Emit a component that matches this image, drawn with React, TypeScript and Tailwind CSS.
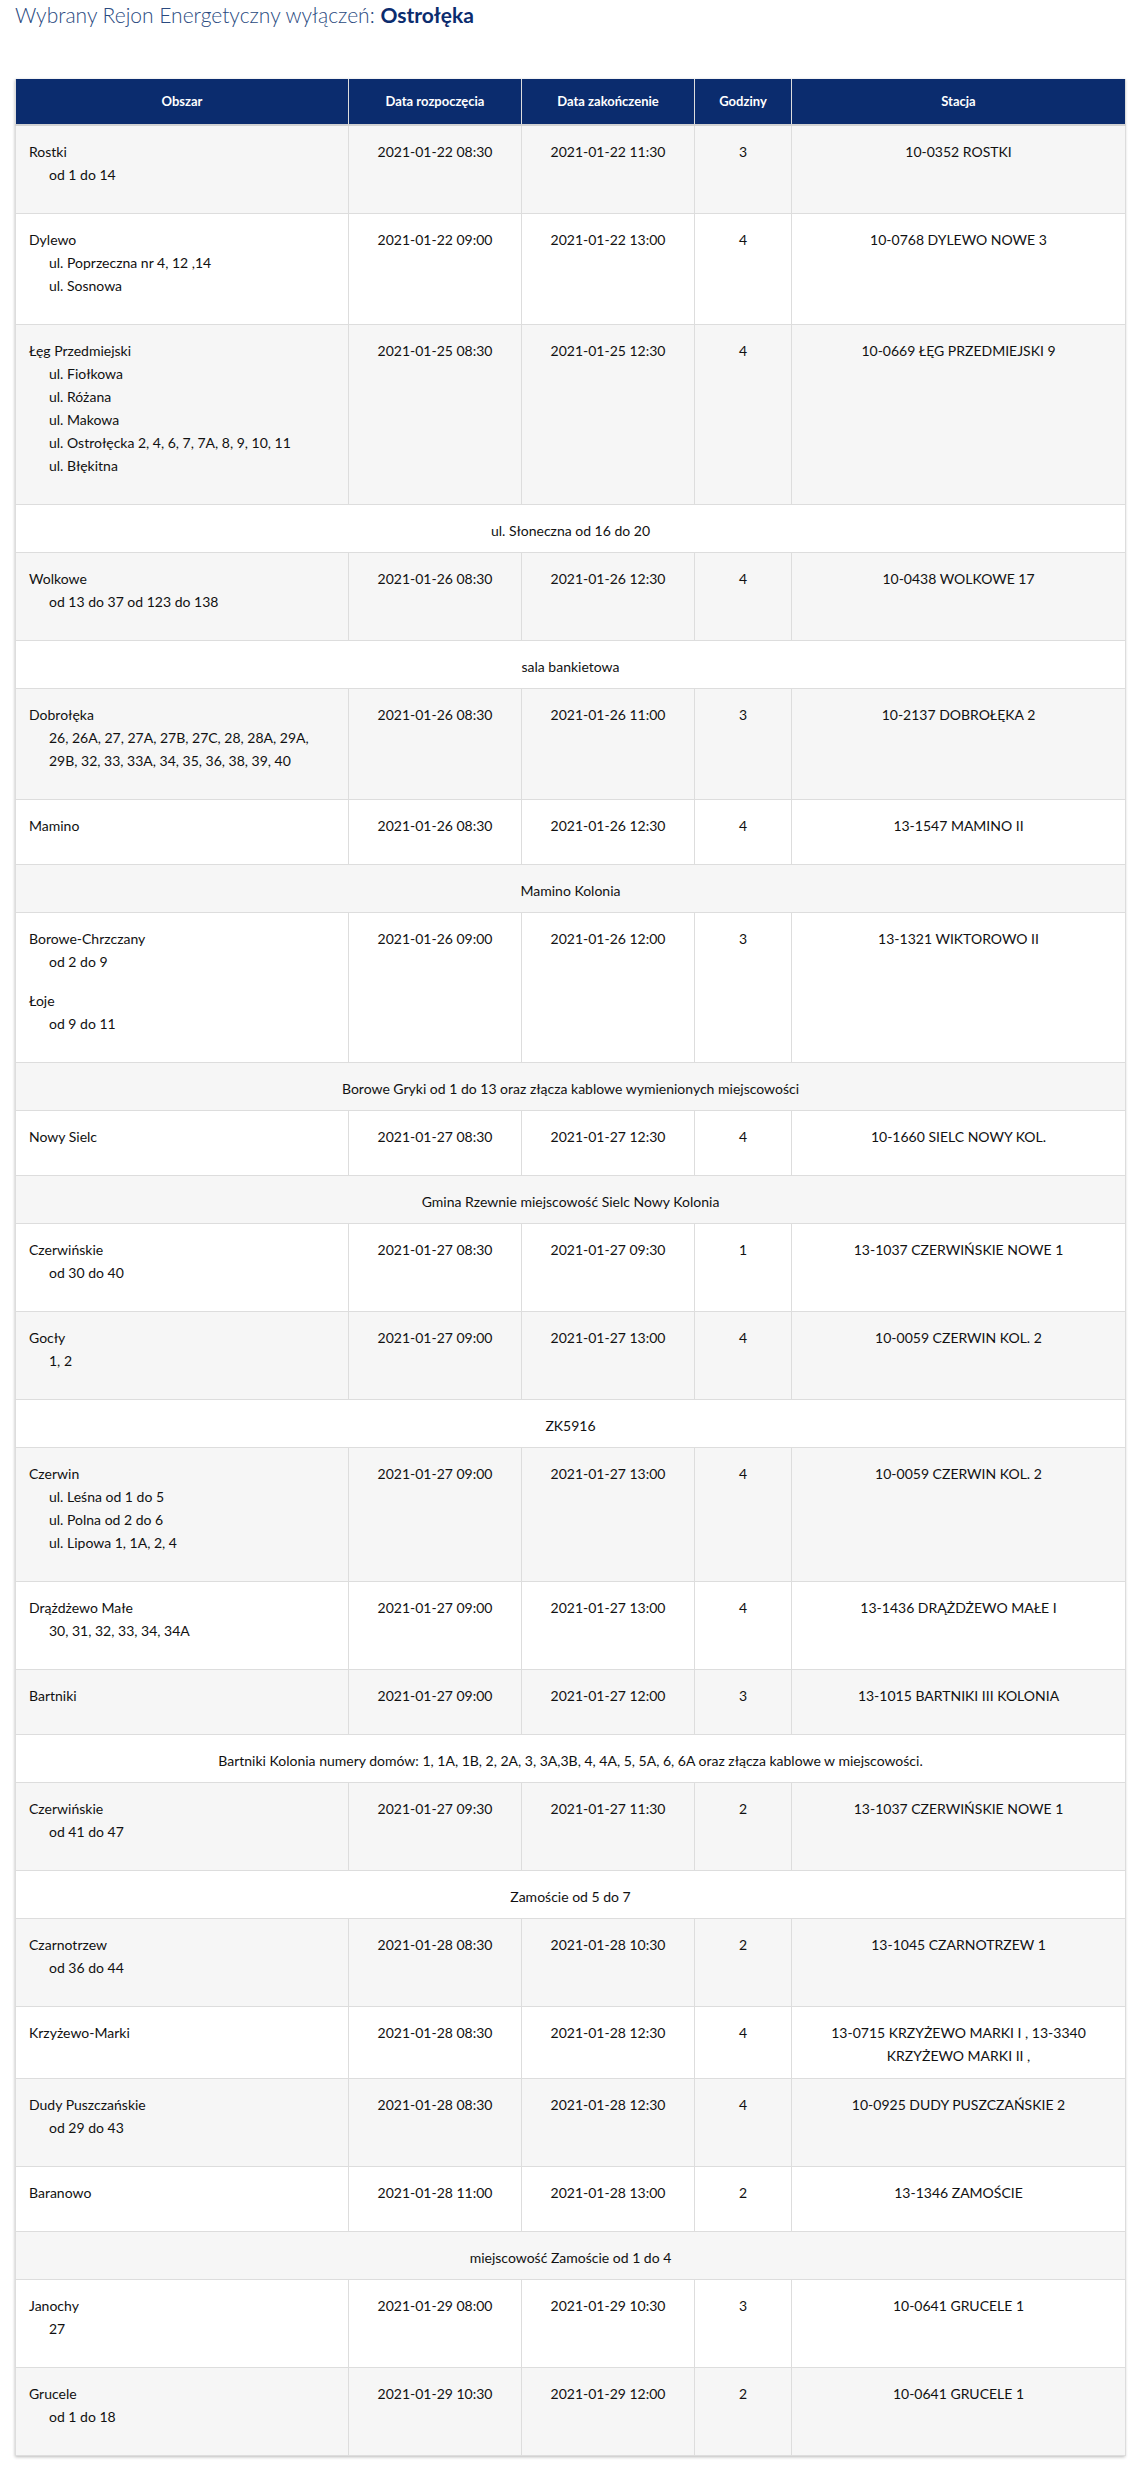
import React from "react";

type Area = { name: string; items: React.ReactNode[] };
type DataRow = {
  kind: "data";
  areas: Area[];
  start: string;
  end: string;
  hours: string;
  station: React.ReactNode;
};
type FullRow = { kind: "full"; text: string };
type Row = DataRow | FullRow;

const d = (
  areas: Area[],
  start: string,
  end: string,
  hours: string,
  station: React.ReactNode
): DataRow => ({ kind: "data", areas, start, end, hours, station });
const f = (text: string): FullRow => ({ kind: "full", text });

const rows: Row[] = [
  d([{ name: "Rostki", items: ["od 1 do 14"] }], "2021-01-22 08:30", "2021-01-22 11:30", "3", "10-0352 ROSTKI"),
  d(
    [{ name: "Dylewo", items: ["ul. Poprzeczna nr 4, 12 ,14", "ul. Sosnowa"] }],
    "2021-01-22 09:00",
    "2021-01-22 13:00",
    "4",
    "10-0768 DYLEWO NOWE 3"
  ),
  d(
    [
      {
        name: "Łęg Przedmiejski",
        items: [
          "ul. Fiołkowa",
          "ul. Różana",
          "ul. Makowa",
          "ul. Ostrołęcka 2, 4, 6, 7, 7A, 8, 9, 10, 11",
          "ul. Błękitna",
        ],
      },
    ],
    "2021-01-25 08:30",
    "2021-01-25 12:30",
    "4",
    "10-0669 ŁĘG PRZEDMIEJSKI 9"
  ),
  f("ul. Słoneczna od 16 do 20"),
  d(
    [{ name: "Wolkowe", items: ["od 13 do 37 od 123 do 138"] }],
    "2021-01-26 08:30",
    "2021-01-26 12:30",
    "4",
    "10-0438 WOLKOWE 17"
  ),
  f("sala bankietowa"),
  d(
    [
      {
        name: "Dobrołęka",
        items: [
          <>
            26, 26A, 27, 27A, 27B, 27C, 28, 28A, 29A,
            <br />
            29B, 32, 33, 33A, 34, 35, 36, 38, 39, 40
          </>,
        ],
      },
    ],
    "2021-01-26 08:30",
    "2021-01-26 11:00",
    "3",
    "10-2137 DOBROŁĘKA 2"
  ),
  d([{ name: "Mamino", items: [] }], "2021-01-26 08:30", "2021-01-26 12:30", "4", "13-1547 MAMINO II"),
  f("Mamino Kolonia"),
  d(
    [
      { name: "Borowe-Chrzczany", items: ["od 2 do 9"] },
      { name: "Łoje", items: ["od 9 do 11"] },
    ],
    "2021-01-26 09:00",
    "2021-01-26 12:00",
    "3",
    "13-1321 WIKTOROWO II"
  ),
  f("Borowe Gryki od 1 do 13 oraz złącza kablowe wymienionych miejscowości"),
  d([{ name: "Nowy Sielc", items: [] }], "2021-01-27 08:30", "2021-01-27 12:30", "4", "10-1660 SIELC NOWY KOL."),
  f("Gmina Rzewnie miejscowość Sielc Nowy Kolonia"),
  d(
    [{ name: "Czerwińskie", items: ["od 30 do 40"] }],
    "2021-01-27 08:30",
    "2021-01-27 09:30",
    "1",
    "13-1037 CZERWIŃSKIE NOWE 1"
  ),
  d([{ name: "Gocły", items: ["1, 2"] }], "2021-01-27 09:00", "2021-01-27 13:00", "4", "10-0059 CZERWIN KOL. 2"),
  f("ZK5916"),
  d(
    [
      {
        name: "Czerwin",
        items: ["ul. Leśna od 1 do 5", "ul. Polna od 2 do 6", "ul. Lipowa 1, 1A, 2, 4"],
      },
    ],
    "2021-01-27 09:00",
    "2021-01-27 13:00",
    "4",
    "10-0059 CZERWIN KOL. 2"
  ),
  d(
    [{ name: "Drążdżewo Małe", items: ["30, 31, 32, 33, 34, 34A"] }],
    "2021-01-27 09:00",
    "2021-01-27 13:00",
    "4",
    "13-1436 DRĄŻDŻEWO MAŁE I"
  ),
  d([{ name: "Bartniki", items: [] }], "2021-01-27 09:00", "2021-01-27 12:00", "3", "13-1015 BARTNIKI III KOLONIA"),
  f(
    "Bartniki Kolonia numery domów: 1, 1A, 1B, 2, 2A, 3, 3A,3B, 4, 4A, 5, 5A, 6, 6A oraz złącza kablowe w miejscowości."
  ),
  d(
    [{ name: "Czerwińskie", items: ["od 41 do 47"] }],
    "2021-01-27 09:30",
    "2021-01-27 11:30",
    "2",
    "13-1037 CZERWIŃSKIE NOWE 1"
  ),
  f("Zamoście od 5 do 7"),
  d(
    [{ name: "Czarnotrzew", items: ["od 36 do 44"] }],
    "2021-01-28 08:30",
    "2021-01-28 10:30",
    "2",
    "13-1045 CZARNOTRZEW 1"
  ),
  d(
    [{ name: "Krzyżewo-Marki", items: [] }],
    "2021-01-28 08:30",
    "2021-01-28 12:30",
    "4",
    <>
      13-0715 KRZYŻEWO MARKI I , 13-3340
      <br />
      KRZYŻEWO MARKI II ,
    </>
  ),
  d(
    [{ name: "Dudy Puszczańskie", items: ["od 29 do 43"] }],
    "2021-01-28 08:30",
    "2021-01-28 12:30",
    "4",
    "10-0925 DUDY PUSZCZAŃSKIE 2"
  ),
  d([{ name: "Baranowo", items: [] }], "2021-01-28 11:00", "2021-01-28 13:00", "2", "13-1346 ZAMOŚCIE"),
  f("miejscowość Zamoście od 1 do 4"),
  d([{ name: "Janochy", items: ["27"] }], "2021-01-29 08:00", "2021-01-29 10:30", "3", "10-0641 GRUCELE 1"),
  d([{ name: "Grucele", items: ["od 1 do 18"] }], "2021-01-29 10:30", "2021-01-29 12:00", "2", "10-0641 GRUCELE 1"),
];

const cell =
  "border border-[#dddddd] px-[13px] pt-[14px] pb-[11px] align-top leading-[23px]";
const fullCell =
  "border border-[#dddddd] px-[13px] pt-[14px] pb-[10px] align-top leading-[23px] text-center";
const th =
  "border-x border-[#dddddd] bg-[#0b2c6e] text-white font-bold text-[13px] text-center h-[46px] px-2";

export default function App() {
  return (
    <div className="bg-white min-h-[2466px] px-[15px] font-['Lato','Noto_Sans',sans-serif] text-[#111111]">
      <h1 className="text-[21px] leading-[30px] font-light text-[#2a4a80]">
        Wybrany Rejon Energetyczny wyłączeń:{" "}
        <strong className="font-bold text-[#0b2c6e]">Ostrołęka</strong>
      </h1>

      <div className="mt-[49px] w-[1110px] shadow-[0_1px_3px_rgba(0,0,0,0.28)]">
        <table className="w-full table-fixed border-collapse text-[14px]">
          <colgroup>
            <col className="w-[333px]" />
            <col className="w-[173px]" />
            <col className="w-[173px]" />
            <col className="w-[97px]" />
            <col className="w-[334px]" />
          </colgroup>
          <thead>
            <tr className="border-b-2 border-b-[#d2d2d2]">
              <th className={th}>Obszar</th>
              <th className={th}>Data rozpoczęcia</th>
              <th className={th}>Data zakończenie</th>
              <th className={th}>Godziny</th>
              <th className={th}>Stacja</th>
            </tr>
          </thead>
          <tbody>
            {rows.map((r, i) => {
              const bg = i % 2 === 0 ? "bg-[#f6f6f6]" : "bg-white";
              if (r.kind === "full") {
                return (
                  <tr key={i} className={bg}>
                    <td colSpan={5} className={fullCell}>
                      {r.text}
                    </td>
                  </tr>
                );
              }
              return (
                <tr key={i} className={bg}>
                  <td className={cell}>
                    {r.areas.map((a, j) => (
                      <div key={j}>
                        <div>{a.name}</div>
                        <ul className="mb-[16px] pl-[20px]">
                          {a.items.map((it, k) => (
                            <li key={k}>{it}</li>
                          ))}
                        </ul>
                      </div>
                    ))}
                  </td>
                  <td className={`${cell} text-center`}>{r.start}</td>
                  <td className={`${cell} text-center`}>{r.end}</td>
                  <td className={`${cell} text-center`}>{r.hours}</td>
                  <td className={`${cell} text-center`}>{r.station}</td>
                </tr>
              );
            })}
          </tbody>
        </table>
      </div>
    </div>
  );
}
